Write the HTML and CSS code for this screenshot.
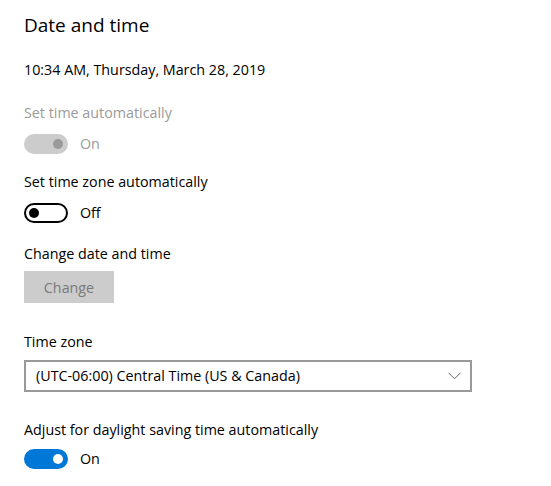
FILE: index.html
```html
<!DOCTYPE html>
<html>
<head>
<meta charset="utf-8">
<link rel="stylesheet" href="styles.css">
</head>
<body>
<div class="page">
  <h1 class="title">Date and time</h1>
  <div class="now">10:34 AM, Thursday, March 28, 2019</div>

  <div class="label disabled l1">Set time automatically</div>
  <div class="toggle-row t-after-label">
    <span class="toggle toggle-disabled"><span class="knob"></span></span>
    <span class="state disabled">On</span>
  </div>

  <div class="label l2">Set time zone automatically</div>
  <div class="toggle-row t-after-label">
    <span class="toggle toggle-off"><span class="knob"></span></span>
    <span class="state">Off</span>
  </div>

  <div class="label l3">Change date and time</div>
  <button class="btn" disabled>Change</button>

  <div class="label l4">Time zone</div>
  <div class="select">
    <span class="select-text">(UTC-06:00) Central Time (US &amp; Canada)</span>
    <svg class="chevron" width="13" height="8" viewBox="0 0 13 8"><path d="M0.5 0.8 L6.5 6.8 L12.5 0.8" fill="none" stroke="#666" stroke-width="1"/></svg>
  </div>

  <div class="label l5">Adjust for daylight saving time automatically</div>
  <div class="toggle-row t-after-label3">
    <span class="toggle toggle-on"><span class="knob"></span></span>
    <span class="state">On</span>
  </div>
</div>
</body>
</html>
```

FILE: styles.css
```css
html, body {
  margin: 0;
  padding: 0;
  background: #ffffff;
}
.page {
  padding: 11px 24px 0 24px;
  font-family: "Open Sans", "Noto Sans", sans-serif;
  color: #000000;
}
.title {
  margin: 0;
  font-size: 19px;
  font-weight: 400;
  line-height: 28px;
}
.now {
  margin-top: 21px;
  font-size: 14.3px;
  line-height: 20px;
}
.label {
  font-size: 14.3px;
  line-height: 20px;
}
.disabled {
  color: #9a9a9a;
}
.l1 { margin-top: 23px; }
.l2 { margin-top: 18px; }
.l3 { margin-top: 21px; }
.l4 { margin-top: 29px; }
.l5 { margin-top: 28px; }

.toggle-row {
  display: flex;
  align-items: center;
  gap: 12px;
  height: 20px;
}
.t-after-label { margin-top: 11px; }
.t-after-label3 { margin-top: 9px; }
.toggle {
  box-sizing: border-box;
  width: 44px;
  height: 20px;
  border-radius: 10px;
  display: flex;
  align-items: center;
  padding: 0 5px;
}
.knob {
  width: 10px;
  height: 10px;
  border-radius: 50%;
}
.toggle-disabled {
  background: #cccccc;
  justify-content: flex-end;
}
.toggle-disabled .knob { background: #9a9a9a; }
.toggle-off {
  border: 2px solid #000000;
  padding: 0 3px;
  justify-content: flex-start;
}
.toggle-off .knob { background: #000000; }
.toggle-on {
  background: #0078d7;
  justify-content: flex-end;
}
.toggle-on .knob { background: #ffffff; }
.state {
  font-size: 14.3px;
  line-height: 20px;
}

.btn {
  display: block;
  margin-top: 7px;
  width: 90px;
  height: 32px;
  border: none;
  background: #cccccc;
  color: #7a7a7a;
  font-family: inherit;
  font-size: 14.3px;
  padding: 0;
}

.select {
  box-sizing: border-box;
  margin-top: 8px;
  width: 448px;
  height: 32px;
  border: 2px solid #999999;
  display: flex;
  align-items: center;
  justify-content: space-between;
  padding: 0 9px 0 10px;
}
.select-text {
  font-size: 14.3px;
  line-height: 20px;
}
.chevron { display: block; }
```
